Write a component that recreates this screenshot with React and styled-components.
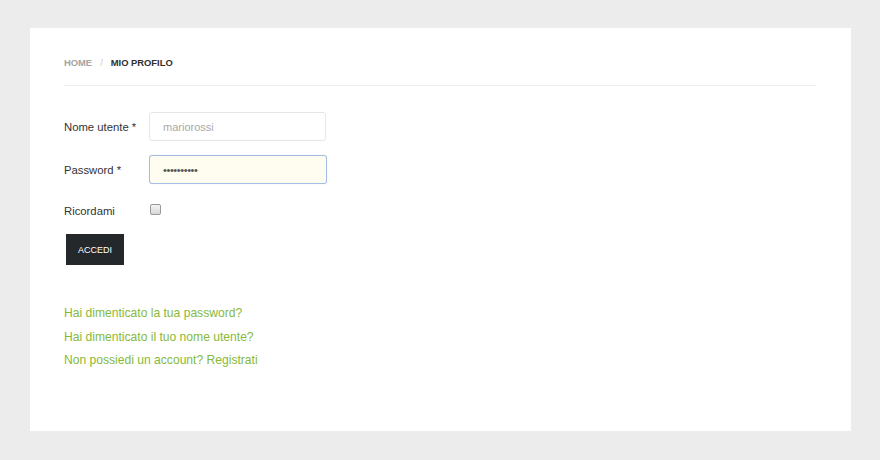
import React from "react";
import styled, { createGlobalStyle } from "styled-components";

const GlobalStyle = createGlobalStyle`
  html, body {
    margin: 0;
    padding: 0;
    background: #ececec;
    font-family: "Liberation Sans", Arial, sans-serif;
  }
`;

const Page = styled.div`
  padding: 28px 29px 29px 30px;
`;

const Card = styled.div`
  background: #fff;
  width: 821px;
  height: 403px;
  box-sizing: border-box;
  padding: 24px 35px 0 34px;
`;

const Breadcrumb = styled.div`
  display: flex;
  align-items: center;
  height: 20px;
  padding-bottom: 13px;
  border-bottom: 1px solid #eeeeee;
  font-size: 9.4px;
  font-weight: bold;
  text-transform: uppercase;
`;

const Crumb = styled.span`
  color: ${(p) => (p.active ? "#2f2f2f" : "#a3a3a3")};
`;

const Sep = styled.span`
  color: #c8c8c8;
  font-weight: normal;
  margin: 0 8px;
`;

const Form = styled.form`
  margin-top: 26px;
  display: flex;
  flex-direction: column;
`;

const Row = styled.div`
  display: flex;
  align-items: center;
  height: ${(p) => p.h || 29}px;
  margin-bottom: ${(p) => p.mb ?? 14}px;
`;

const Label = styled.label`
  width: 85px;
  font-size: 11.3px;
  color: #333;
`;

const Input = styled.input`
  box-sizing: border-box;
  width: ${(p) => p.w}px;
  height: 29px;
  padding: 0 13px;
  border: 1px solid ${(p) => (p.focused ? "#a3bde6" : "#e6e6e6")};
  border-radius: 3px;
  background: ${(p) => (p.focused ? "#fffdf0" : "#fff")};
  font-family: "Liberation Sans", Arial, sans-serif;
  font-size: 11px;
  color: #555;
  letter-spacing: ${(p) => (p.type === "password" ? "-0.4px" : "normal")};
  outline: none;
  box-shadow: ${(p) => (p.focused ? "0 0 1px rgba(120,150,220,0.4)" : "none")};

  &::placeholder {
    color: #a9a9a9;
  }
`;

const Check = styled.input`
  appearance: none;
  margin: 0 0 4px 1px;
  width: 11px;
  height: 11px;
  box-sizing: border-box;
  border: 1px solid #9a9a9a;
  border-radius: 2px;
  background: linear-gradient(#f4f4f4, #d8d8d8);
`;

const Button = styled.button`
  margin-left: 2px;
  width: 58px;
  height: 31px;
  border: none;
  background: #24282b;
  color: #fff;
  font-family: "Liberation Sans", Arial, sans-serif;
  font-size: 9px;
  text-transform: uppercase;
  cursor: pointer;
`;

const Links = styled.div`
  margin-top: 37px;
  display: flex;
  flex-direction: column;
`;

const Link = styled.a`
  font-size: 12.1px;
  line-height: 23.5px;
  color: #86b93a;
  text-decoration: none;
`;

export default function App() {
  return (
    <>
      <GlobalStyle />
      <Page>
        <Card>
          <Breadcrumb>
            <Crumb>Home</Crumb>
            <Sep>/</Sep>
            <Crumb active>Mio profilo</Crumb>
          </Breadcrumb>
          <Form onSubmit={(e) => e.preventDefault()}>
            <Row>
              <Label>Nome utente *</Label>
              <Input w={177} placeholder="mariorossi" />
            </Row>
            <Row>
              <Label>Password *</Label>
              <Input w={178} type="password" defaultValue="mariorossi" focused autoFocus />
            </Row>
            <Row h={26} mb={10}>
              <Label>Ricordami</Label>
              <Check type="checkbox" />
            </Row>
            <div>
              <Button type="submit">Accedi</Button>
            </div>
          </Form>
          <Links>
            <Link href="#">Hai dimenticato la tua password?</Link>
            <Link href="#">Hai dimenticato il tuo nome utente?</Link>
            <Link href="#">Non possiedi un account? Registrati</Link>
          </Links>
        </Card>
      </Page>
    </>
  );
}
